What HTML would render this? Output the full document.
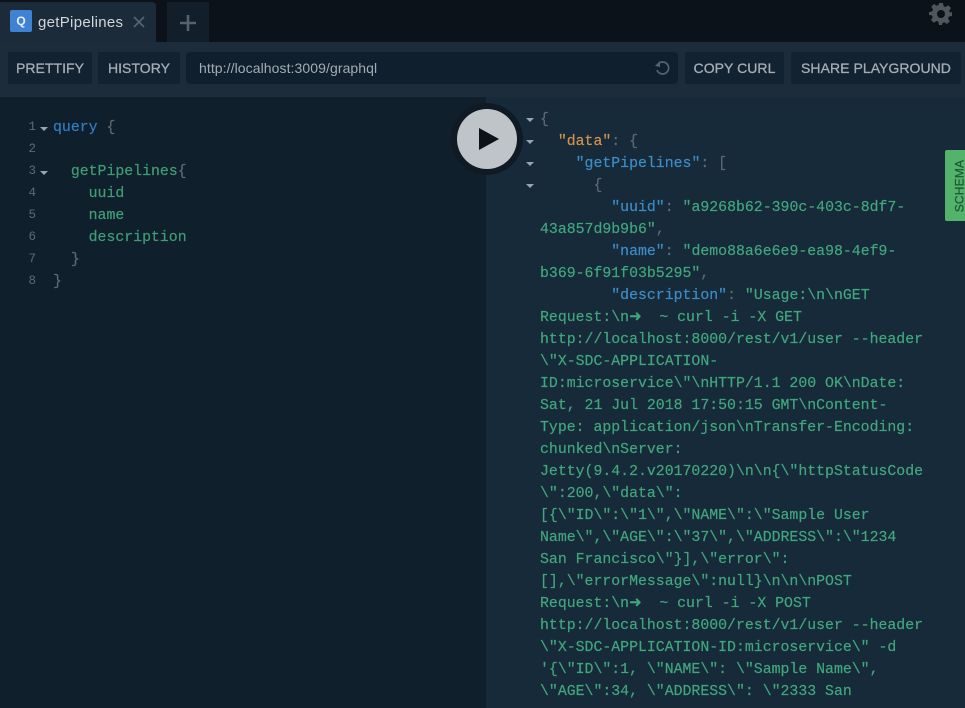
<!DOCTYPE html>
<html><head><meta charset="utf-8">
<style>
html,body{margin:0;padding:0;width:965px;height:708px;overflow:hidden;background:#101f2c}
*{box-sizing:border-box}
.a{position:absolute}
#top{left:0;top:0;width:965px;height:42px;background:#0b1219}
#tab{left:0;top:2px;width:156px;height:40px;background:#1b2b3a;border-radius:0 4px 0 0}
#q{left:10px;top:10px;width:22px;height:22px;background:#3f82d4;border-radius:2px;color:#e8f0f8;font:bold 12px/22px "Liberation Sans",sans-serif;text-align:center}
#tt{left:38px;top:13px;font:15px/20px "Liberation Sans",sans-serif;color:#d0d6da;letter-spacing:.3px}
#plus{left:167px;top:2px;width:42px;height:40px;background:#121e2a}
#bar{left:0;top:42px;width:965px;height:55px;background:#1c2c3b}
.b{top:52px;height:32px;background:#132230;border-radius:2px;color:#a4adb4;font:14px/33px "Liberation Sans",sans-serif;text-align:center;letter-spacing:.05px;-webkit-text-stroke:.3px #a4adb4}
#url{left:186px;top:52px;width:492px;height:32px;background:#0f1f2d;border-radius:4px;color:#a3acb3;font:14px/33px "Liberation Sans",sans-serif;padding-left:13px;letter-spacing:.08px}
#ed{left:0;top:97px;width:486px;height:611px;background:#101f2c}
#res{left:486px;top:97px;width:479px;height:611px;background:#172a3a}
pre{margin:0;font-family:"Liberation Mono",monospace;font-size:14.85px;line-height:22px;position:absolute;-webkit-text-stroke:.2px}
.n{color:#5d6a73;font:12.5px/22px "Liberation Mono",monospace;position:absolute;left:26px;width:10px;text-align:right}
.c{position:absolute;width:0;height:0;border-left:4px solid transparent;border-right:4px solid transparent;border-top:4.5px solid #9aa5ad}
.g{color:#3f9d74}.k{color:#2f7fc0}.d{color:#5d6a73}.o{color:#d0934d}.s{color:#41a67c}.kk{color:#3e8cc4}
#ring{left:451px;top:103px;width:72px;height:72px;border-radius:50%;background:#0f1a24}
#play{left:457px;top:109px;width:60px;height:60px;border-radius:50%;background:#bec4c8}
#sch{left:945px;top:150px;width:20px;height:71px;background:#54b36b;border-radius:2px 0 0 2px}
#sch span{position:absolute;left:-21px;top:26px;width:71px;height:20px;transform:rotate(-90deg);text-align:center;color:#1f5a38;font:12px/20px "Liberation Sans",sans-serif;letter-spacing:.2px;-webkit-text-stroke:.3px #1f5a38}
</style></head><body>
<div class="a" id="top"></div>
<div class="a" id="tab"></div>
<div class="a" id="q">Q</div>
<div class="a" id="tt">getPipelines</div>
<svg class="a" style="left:133px;top:16px" width="12" height="12" viewBox="0 0 12 12"><path d="M1 1L11 11M11 1L1 11" stroke="#59646d" stroke-width="1.6"/></svg>
<div class="a" id="plus"></div>
<svg class="a" style="left:179px;top:14px" width="18" height="18" viewBox="0 0 18 18"><path d="M9 1V17M1 9H17" stroke="#56626c" stroke-width="2.6"/></svg>
<svg class="a" style="left:929px;top:2px" width="24" height="24" viewBox="0 0 24 24"><path fill="#4f565c" fill-rule="evenodd" d="M10 1h4l.6 3.2 1.9.8 2.7-1.8 2.8 2.8-1.8 2.7.8 1.9L23 10v4l-3.2.6-.8 1.9 1.8 2.7-2.8 2.8-2.7-1.8-1.9.8L13 23h-3l-.6-3.2-1.9-.8-2.7 1.8-2.8-2.8 1.8-2.7-.8-1.9L0 13v-3l3.2-.6.8-1.9L2.2 4.8 5 2l2.7 1.8 1.9-.8zM12 8a4 4 0 1 0 0 8 4 4 0 0 0 0-8z"/></svg>
<div class="a" id="bar"></div>
<div class="a b" style="left:8px;width:84px">PRETTIFY</div>
<div class="a b" style="left:98px;width:82px">HISTORY</div>
<div class="a" id="url">http://localhost:3009/graphql</div>
<svg class="a" style="left:654px;top:60px" width="17" height="16" viewBox="0 0 17 16"><path d="M6 2.6A6 6 0 1 1 3 10" fill="none" stroke="#56626c" stroke-width="1.7"/><path d="M1 6l5-5v6z" fill="#56626c"/></svg>
<div class="a b" style="left:685px;width:99px">COPY CURL</div>
<div class="a b" style="left:791px;width:170px">SHARE PLAYGROUND</div>
<div class="a" id="ed"></div>
<div class="a" id="res"></div>

<div class="n" style="top:116px">1</div><div class="n" style="top:138px">2</div><div class="n" style="top:160px">3</div><div class="n" style="top:182px">4</div><div class="n" style="top:204px">5</div><div class="n" style="top:226px">6</div><div class="n" style="top:248px">7</div><div class="n" style="top:270px">8</div>
<div class="c" style="left:40px;top:127px"></div><div class="c" style="left:40px;top:171px"></div>
<pre style="left:53px;top:117px"><span class="k">query</span> <span class="d">{</span>

  <span class="g">getPipelines</span><span class="d">{</span>
    <span class="g">uuid</span>
    <span class="g">name</span>
    <span class="g">description</span>
  <span class="d">}</span>
<span class="d">}</span></pre>

<div class="c" style="left:526px;top:118px"></div><div class="c" style="left:526px;top:140px"></div><div class="c" style="left:526px;top:162px"></div><div class="c" style="left:526px;top:184px"></div>
<pre class="s" style="left:540px;top:109px"><span class="d">{</span>
  <span class="o">"data"</span><span class="d">: {</span>
    <span class="kk">"getPipelines"</span><span class="d">: [</span>
      <span class="d">{</span>
        <span class="kk">"uuid"</span><span class="d">:</span> "a9268b62-390c-403c-8df7-
43a857d9b9b6"<span class="d">,</span>
        <span class="kk">"name"</span><span class="d">:</span> "demo88a6e6e9-ea98-4ef9-
b369-6f91f03b5295"<span class="d">,</span>
        <span class="kk">"description"</span><span class="d">:</span> "Usage:\n\nGET
Request:\n➜  ~ curl -i -X GET
http://localhost:8000/rest/v1/user --header
\"X-SDC-APPLICATION-
ID:microservice\"\nHTTP/1.1 200 OK\nDate:
Sat, 21 Jul 2018 17:50:15 GMT\nContent-
Type: application/json\nTransfer-Encoding:
chunked\nServer:
Jetty(9.4.2.v20170220)\n\n{\"httpStatusCode
\":200,\"data\":
[{\"ID\":\"1\",\"NAME\":\"Sample User
Name\",\"AGE\":\"37\",\"ADDRESS\":\"1234
San Francisco\"}],\"error\":
[],\"errorMessage\":null}\n\n\nPOST
Request:\n➜  ~ curl -i -X POST
http://localhost:8000/rest/v1/user --header
\"X-SDC-APPLICATION-ID:microservice\" -d
'{\"ID\":1, \"NAME\": \"Sample Name\",
\"AGE\":34, \"ADDRESS\": \"2333 San</pre>

<div class="a" id="ring"></div>
<div class="a" id="play"></div>
<svg class="a" style="left:478px;top:127px" width="22" height="24" viewBox="0 0 22 24"><path d="M1 1L21 12L1 23z" fill="#0c1218"/></svg>
<div class="a" id="sch"><span>SCHEMA</span></div>
</body></html>
